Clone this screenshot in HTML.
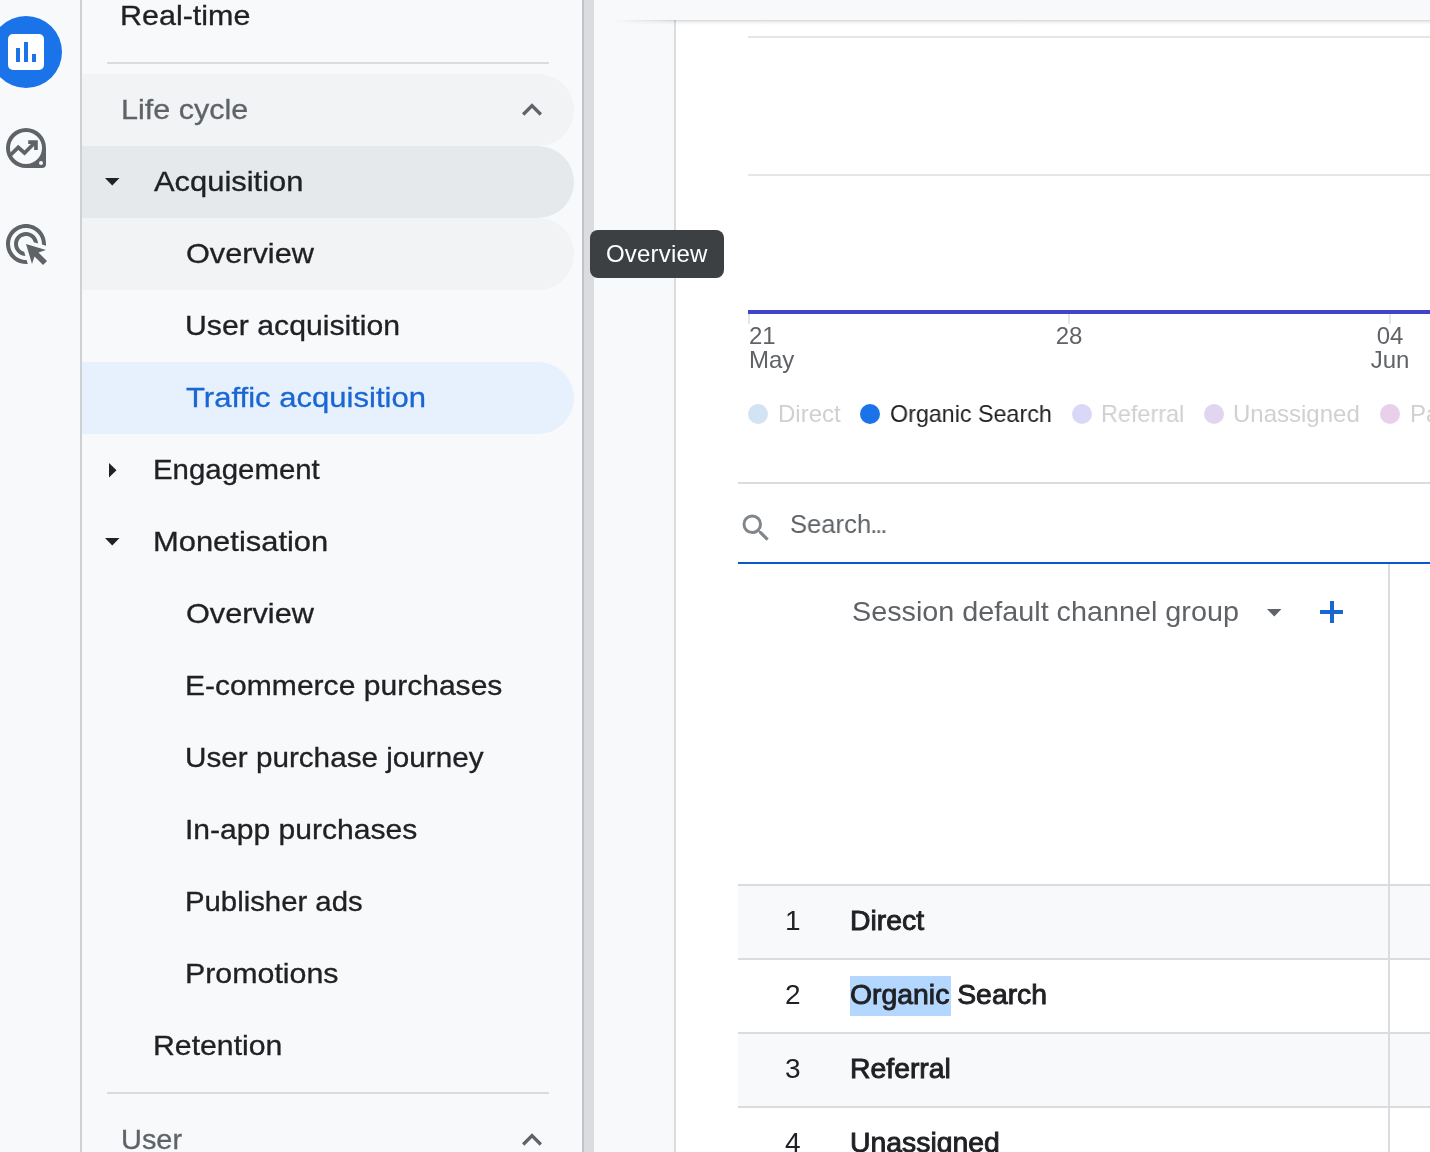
<!DOCTYPE html>
<html><head><meta charset="utf-8">
<style>
html,body{margin:0;padding:0;}
body{width:1430px;height:1152px;overflow:hidden;position:relative;background:#f8f9fa;font-family:"Liberation Sans",sans-serif;}
.abs{position:absolute;}
.g{will-change:transform;}
#rail{left:0;top:0;width:80px;height:1152px;background:#f8f9fa;}
#railb{left:80px;top:0;width:2px;height:1152px;background:#cdd0d4;}
#nav{left:82px;top:0;width:500px;height:1152px;background:#f8f9fa;}
.pill{position:absolute;left:82px;width:492px;height:72px;border-radius:0 36px 36px 0;}
.t{will-change:transform;-webkit-text-stroke:0.3px currentColor;position:absolute;white-space:nowrap;font-size:28px;line-height:32px;color:#202124;transform-origin:0 0;}
.div{position:absolute;left:107px;width:442px;height:2px;background:#dadce0;}
#sb1{left:582px;top:0;width:2px;height:1152px;background:#bfc2c6;}
#sb2{left:584px;top:0;width:10px;height:1152px;background:#dadce0;}
#hdr{left:594px;top:0;width:836px;height:20px;background:#f8f9fa;z-index:3;}
#hsh{left:611px;top:20px;width:819px;height:5px;z-index:3;background:linear-gradient(rgba(60,64,67,.22),rgba(60,64,67,.08) 40%,rgba(60,64,67,0));-webkit-mask-image:linear-gradient(to right,transparent 0,#000 70px);}
#card{left:674px;top:20px;width:756px;height:1132px;background:#fff;border-left:2px solid #dadce0;box-sizing:border-box;}
.grid{position:absolute;left:748px;width:682px;height:2px;background:#e6e6e6;}
.ax{will-change:transform;position:absolute;font-size:24px;line-height:24px;color:#5f6368;white-space:nowrap;}
.dot{position:absolute;top:404px;width:20px;height:20px;border-radius:50%;}
.lg{will-change:transform;position:absolute;top:398px;font-size:24px;line-height:32px;white-space:nowrap;color:#d0d0d0;}
.row{position:absolute;left:738px;width:692px;height:72px;border-top:2px solid #dadce0;}
.rn{will-change:transform;position:absolute;left:785px;font-size:28px;line-height:32px;color:#202124;}
.rt{will-change:transform;position:absolute;left:850px;font-size:28px;line-height:32px;color:#202124;-webkit-text-stroke:0.9px #202124;transform:scaleX(1.013);transform-origin:0 0;white-space:nowrap;}
</style></head>
<body>
<div id="rail" class="abs"></div>
<div id="railb" class="abs"></div>
<!-- Reports icon -->
<div class="abs" style="left:-10px;top:16px;width:72px;height:72px;border-radius:50%;background:#1a73e8;"></div>
<div class="abs" style="left:8px;top:34px;width:36px;height:36px;border-radius:5px;background:#fff;"></div>
<div class="abs" style="left:16px;top:48px;width:4px;height:14px;background:#1a73e8;"></div>
<div class="abs" style="left:24px;top:42px;width:4px;height:20px;background:#1a73e8;"></div>
<div class="abs" style="left:32px;top:54px;width:4px;height:8px;background:#1a73e8;"></div>
<!-- Explore icon -->
<svg class="abs" style="left:0;top:0" width="80" height="300" viewBox="0 0 80 300">
  <path fill="#5f6368" fill-rule="evenodd" d="M6,148 A20,20 0 0 1 46,148 L46,164 Q46,168 42,168 L26,168 A20,20 0 0 1 6,148 Z M10,148 A16,16 0 1 0 42,148 A16,16 0 1 0 10,148 Z M39,163 A2,2 0 1 0 43,163 A2,2 0 1 0 39,163 Z"/>
  <polyline fill="none" stroke="#5f6368" stroke-width="3.8" stroke-linejoin="miter" points="9,156.5 18.2,147.4 24.5,153 35,142.5"/>
  <path fill="#5f6368" d="M28.2,140.2 L37.8,140.2 L37.8,149.9 L34.1,149.9 L34.1,143.9 L28.2,143.9 Z"/>
  <g transform="translate(2,220) scale(2)"><path fill="#5f6368" d="M11.71,17.99C8.53,17.84,6,15.22,6,12c0-3.310,2.690-6,6-6c3.220,0,5.840,2.530,5.990,5.710l-2.100-0.630C15.480,9.310,13.890,8,12,8c-2.210,0-4,1.790-4,4c0,1.890,1.310,3.480,3.080,3.890L11.710,17.990z M22,12c0,0.300-0.010,0.600-0.040,0.900l-1.970-0.590C20,12.210,20,12.100,20,12c0-4.420-3.580-8-8-8s-8,3.580-8,8s3.580,8,8,8c0.100,0,0.210,0,0.310-0.010l0.590,1.970C12.600,21.990,12.300,22,12,22C6.480,22,2,17.520,2,12C2,6.480,6.480,2,12,2S22,6.480,22,12z M18.230,16.260L22,15l-10-3l3,10l1.260-3.770l4.270,4.270l1.980-1.980L18.230,16.260z"/></g>
</svg>

<div id="nav" class="abs"></div>
<!-- NAV CONTENT -->
<div id="navc">
<div class="pill" style="top:74px;background:#f1f3f4"></div>
<div class="pill" style="top:146px;background:#e6e9ec"></div>
<div class="pill" style="top:218px;background:#f1f3f4"></div>
<div class="pill" style="top:362px;background:#e7f0fd"></div>
<div class="div" style="top:62px"></div>
<div class="div" style="top:1092px"></div>
<div class="t" style="top:0px;left:120.4px;color:#202124;transform:scaleX(1.0879)">Real-time</div>
<div class="t" style="top:94px;left:120.8px;color:#5f6368;transform:scaleX(1.0905)">Life cycle</div>
<div class="t" style="top:166px;left:154.4px;color:#202124;transform:scaleX(1.1034)">Acquisition</div>
<div class="t" style="top:238px;left:186.0px;color:#202124;transform:scaleX(1.0960)">Overview</div>
<div class="t" style="top:310px;left:184.8px;color:#202124;transform:scaleX(1.0794)">User acquisition</div>
<div class="t" style="top:382px;left:185.8px;color:#1967d2;transform:scaleX(1.1094)">Traffic acquisition</div>
<div class="t" style="top:454px;left:153.0px;color:#202124;transform:scaleX(1.0502)">Engagement</div>
<div class="t" style="top:526px;left:153.0px;color:#202124;transform:scaleX(1.1036)">Monetisation</div>
<div class="t" style="top:598px;left:186.0px;color:#202124;transform:scaleX(1.0960)">Overview</div>
<div class="t" style="top:670px;left:184.8px;color:#202124;transform:scaleX(1.0735)">E-commerce purchases</div>
<div class="t" style="top:742px;left:184.8px;color:#202124;transform:scaleX(1.0598)">User purchase journey</div>
<div class="t" style="top:814px;left:184.8px;color:#202124;transform:scaleX(1.0738)">In-app purchases</div>
<div class="t" style="top:886px;left:184.8px;color:#202124;transform:scaleX(1.0471)">Publisher ads</div>
<div class="t" style="top:958px;left:184.8px;color:#202124;transform:scaleX(1.0841)">Promotions</div>
<div class="t" style="top:1030px;left:152.9px;color:#202124;transform:scaleX(1.0797)">Retention</div>
<div class="t" style="top:1124px;left:120.7px;color:#5f6368;transform:scaleX(1.0326)">User</div>
<svg class="abs" style="left:512px;top:90px" width="40" height="40" viewBox="0 0 24 24"><path fill="#5f6368" d="M12 8l-6 6 1.41 1.41L12 10.83l4.59 4.58L18 14z"/></svg>
<svg class="abs" style="left:512px;top:1120px" width="40" height="40" viewBox="0 0 24 24"><path fill="#5f6368" d="M12 8l-6 6 1.41 1.41L12 10.83l4.59 4.58L18 14z"/></svg>
<svg class="abs" style="left:105px;top:178px" width="15" height="8" viewBox="0 0 15 8"><path fill="#202124" d="M0 0H14.5L7.25 7.5Z"/></svg>
<svg class="abs" style="left:105px;top:538px" width="15" height="8" viewBox="0 0 15 8"><path fill="#202124" d="M0 0H14.5L7.25 7.5Z"/></svg>
<svg class="abs" style="left:109px;top:463px" width="8" height="15" viewBox="0 0 8 15"><path fill="#202124" d="M0 0V14.5L7.5 7.25Z"/></svg>
</div>

<div id="sb1" class="abs"></div>
<div id="sb2" class="abs"></div>
<div id="hdr" class="abs"></div>
<div id="hsh" class="abs"></div>
<div id="card" class="abs"></div>
<!-- MAIN CONTENT -->
<div id="mainc">
<div class="grid" style="top:36px"></div>
<div class="grid" style="top:174px"></div>
<div class="abs" style="left:748px;top:310px;width:682px;height:4px;background:#3f45c9"></div>
<div class="abs" style="left:748px;top:314px;width:2px;height:10px;background:#e6e6e6"></div>
<div class="abs" style="left:1068px;top:314px;width:2px;height:10px;background:#e6e6e6"></div>
<div class="abs" style="left:1389px;top:314px;width:2px;height:10px;background:#e6e6e6"></div>
<div class="ax" style="left:749px;top:324px">21</div>
<div class="ax" style="left:749px;top:348px">May</div>
<div class="ax" style="left:1019px;top:324px;width:100px;text-align:center">28</div>
<div class="ax" style="left:1340px;top:324px;width:100px;text-align:center">04</div>
<div class="ax" style="left:1340px;top:348px;width:100px;text-align:center">Jun</div>
<div class="dot" style="left:748px;background:#d2e3f3"></div>
<div class="lg" style="left:778px;color:#d0d0d0">Direct</div>
<div class="dot" style="left:860px;background:#1a73e8"></div>
<div class="lg" style="left:890px;color:#202124;transform:scaleX(0.97);transform-origin:0 0">Organic Search</div>
<div class="dot" style="left:1072px;background:#d9d9f7"></div>
<div class="lg" style="left:1101px;color:#d0d0d0;transform:scaleX(0.975);transform-origin:0 0">Referral</div>
<div class="dot" style="left:1204px;background:#e1d5f2"></div>
<div class="lg" style="left:1233px;color:#d0d0d0">Unassigned</div>
<div class="dot" style="left:1380px;background:#e8d0ea"></div>
<div class="lg" style="left:1410px;color:#d0d0d0">Paid Search</div>
<div class="abs" style="left:738px;top:482px;width:692px;height:2px;background:#dadce0"></div>
<svg class="abs" style="left:738px;top:510px" width="36" height="36" viewBox="0 0 24 24"><path fill="#80868b" d="M15.5 14h-.79l-.28-.27A6.471 6.471 0 0 0 16 9.5 6.5 6.5 0 1 0 9.5 16c1.61 0 3.09-.59 4.23-1.57l.27.28v.79l5 4.99L20.49 19l-4.99-5zm-6 0C7.01 14 5 11.99 5 9.5S7.01 5 9.5 5 14 7.01 14 9.5 11.99 14 9.5 14z"/></svg>
<div class="abs g" style="left:790px;top:508px;font-size:26px;line-height:32px;color:#5f6368;white-space:nowrap;transform:scaleX(0.984);transform-origin:0 0">Search<span style="letter-spacing:-2px;margin-left:-1px">...</span></div>
<div class="abs" style="left:738px;top:562px;width:692px;height:2px;background:#0b57d0"></div>
<div class="abs g" style="left:852px;top:596px;font-size:28px;line-height:32px;color:#5f6368;white-space:nowrap;transform:scaleX(1.027);transform-origin:0 0">Session default channel group</div>
<svg class="abs" style="left:1267px;top:609px" width="15" height="8" viewBox="0 0 15 8"><path fill="#5f6368" d="M0 0H14.5L7.25 7.5Z"/></svg>
<div class="abs" style="left:1320px;top:610px;width:23px;height:4px;background:#1967d2"></div>
<div class="abs" style="left:1329.5px;top:601px;width:4px;height:22px;background:#1967d2"></div>
<div class="abs" style="left:1388px;top:564px;width:2px;height:588px;background:#dadce0;z-index:2"></div>
<div class="row" style="top:884px;background:#f8f9fa"></div>
<div class="rn" style="top:905px">1</div>
<div class="rt" style="top:905px">Direct</div>
<div class="row" style="top:958px;background:#fff"></div>
<div class="rn" style="top:979px">2</div>
<div class="abs" style="left:850px;top:976px;width:101px;height:40px;background:#b4d7ff"></div>
<div class="rt" style="top:979px">Organic Search</div>
<div class="row" style="top:1032px;background:#f8f9fa"></div>
<div class="rn" style="top:1053px">3</div>
<div class="rt" style="top:1053px">Referral</div>
<div class="row" style="top:1106px;background:#fff"></div>
<div class="rn" style="top:1127px">4</div>
<div class="rt" style="top:1127px">Unassigned</div>
<div class="abs" style="left:590px;top:230px;width:134px;height:48px;border-radius:8px;background:#3c4043;z-index:5"></div>
<div class="abs g" style="left:606px;top:238px;font-size:24px;line-height:32px;color:#fff;white-space:nowrap;letter-spacing:0.2px;z-index:6">Overview</div>
</div>

</body></html>
